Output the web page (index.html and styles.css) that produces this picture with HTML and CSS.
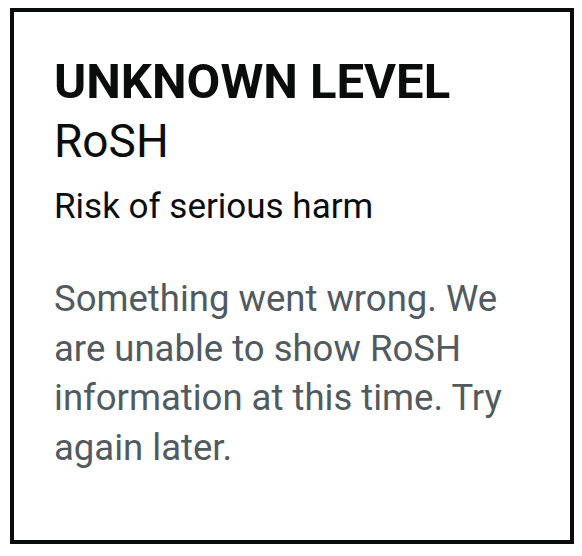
FILE: index.html
```html
<!DOCTYPE html>
<html lang="en">
<head>
<meta charset="utf-8">
<title>RoSH</title>
<link rel="stylesheet" href="styles.css">
</head>
<body>
<section class="card">
  <h2 class="level">UNKNOWN LEVEL</h2>
  <p class="title">RoSH</p>
  <p class="subtitle">Risk of serious harm</p>
  <p class="message">Something went wrong. We are unable to show RoSH information at this time. Try again later.</p>
</section>
</body>
</html>
```
FILE: styles.css
```css
html, body {
  margin: 0;
  padding: 0;
  background: #ffffff;
}
body {
  padding: 8px 8px 12px 10px;
  font-family: Roboto, "Liberation Sans", Arial, sans-serif;
  color: #0b0c0c;
}
.card {
  box-sizing: border-box;
  width: 564px;
  height: 536px;
  border: 4px solid #0b0c0c;
  padding: 45px 40px 40px 40px;
}
.level {
  margin: 0;
  font-size: 49px;
  line-height: 50px;
  font-weight: 700;
}
.title {
  margin: 6px 0 0;
  font-size: 46px;
  line-height: 56px;
  font-weight: 400;
}
.subtitle {
  margin: 18px 0 0;
  font-size: 35px;
  line-height: 40px;
}
.message {
  margin: 47px 0 0;
  font-size: 36.5px;
  line-height: 49.7px;
  color: #505a5f;
}
```
